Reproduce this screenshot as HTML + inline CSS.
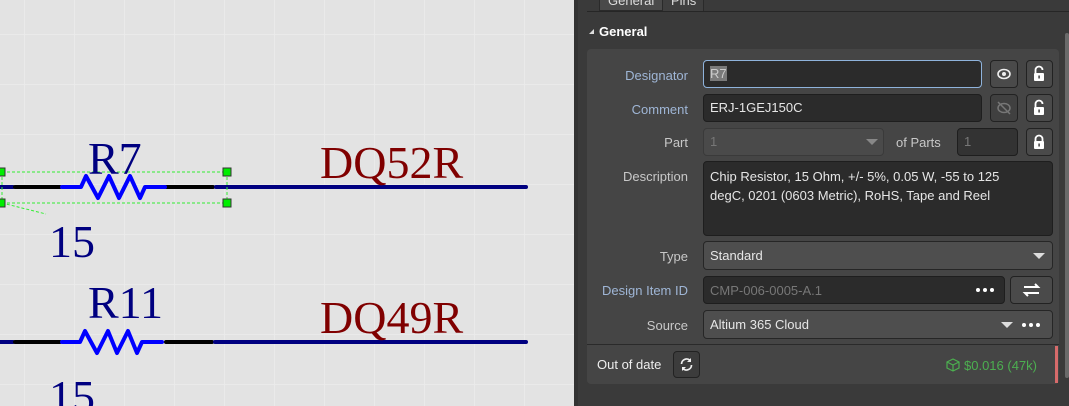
<!DOCTYPE html>
<html><head><meta charset="utf-8"><style>
*{box-sizing:border-box;margin:0;padding:0}
body{width:1069px;height:406px;overflow:hidden;background:#e3e3e3;font-family:"Liberation Sans",sans-serif;position:relative}
.abs{position:absolute}
#panel{left:574px;top:0;width:495px;height:406px;background:#3a3a3a}
.lbl{position:absolute;right:381px;color:#c8c8c8;font-size:13px;text-align:right;white-space:nowrap}
.lbl.b{color:#9fb6d6}
.inp{position:absolute;background:#2b2b2b;border:1px solid #1e1e1e;border-radius:4px;color:#e6e6e6;font-size:13px;padding-left:6px;line-height:25px}
.dd{position:absolute;background:#4e4e4e;border:1px solid #262626;border-radius:4px;color:#e6e6e6;font-size:13px;padding-left:6px;line-height:25px}
.btn{position:absolute;background:#4a4a4a;border:1px solid #222;border-radius:4px}
.tri{position:absolute;width:0;height:0;border-left:6px solid transparent;border-right:6px solid transparent;border-top:6px solid #ddd}
.dots{position:absolute;display:flex;gap:3px}
.dots i{width:4px;height:4px;border-radius:2px;background:#fff}
</style></head><body>
<svg class="abs" style="left:0;top:0" width="574" height="406">
<defs><pattern id="g" width="50" height="50" patternUnits="userSpaceOnUse" x="24" y="34"><path d="M0 0H50M0 0V50" stroke="#ececec" stroke-width="1.5" fill="none"/></pattern></defs>
<rect width="574" height="406" fill="url(#g)"/>
<g stroke-linecap="round" fill="none">
<line x1="0" y1="187" x2="13" y2="187" stroke="#000080" stroke-width="4"/>
<line x1="15" y1="187" x2="60" y2="187" stroke="#000" stroke-width="4"/>
<line x1="166" y1="187" x2="213" y2="187" stroke="#000" stroke-width="4"/>
<line x1="216" y1="187" x2="526" y2="187" stroke="#000080" stroke-width="4"/>
<polyline points="62,187 81,187 86,176 98,198 109,176 119,198 130,176 140,198 145,187 165,187" stroke="#0000ff" stroke-width="4" stroke-linejoin="round"/>
<line x1="0" y1="342" x2="13" y2="342" stroke="#000080" stroke-width="4"/>
<line x1="15" y1="342" x2="60" y2="342" stroke="#000" stroke-width="4"/>
<line x1="166" y1="342" x2="212" y2="342" stroke="#000" stroke-width="4"/>
<line x1="215" y1="342" x2="526" y2="342" stroke="#000080" stroke-width="4"/>
<polyline points="62,342 80,342 85,331 97,353 108,331 117,353 128,331 137,353 142,342 162,342" stroke="#0000ff" stroke-width="4" stroke-linejoin="round"/>
</g>
<g stroke="#33ee33" stroke-width="1" stroke-dasharray="3,2" fill="none">
<line x1="2" y1="172" x2="227" y2="172"/><line x1="2" y1="203" x2="227" y2="203"/>
<line x1="2" y1="172" x2="2" y2="203"/><line x1="227" y1="172" x2="227" y2="203"/>
<line x1="2" y1="203" x2="46" y2="214"/>
</g>
<g fill="#00ee00" stroke="#333" stroke-width="1">
<rect x="-3" y="168" width="8" height="8"/><rect x="223" y="168" width="8" height="8"/>
<rect x="-3" y="199" width="8" height="8"/><rect x="223" y="199" width="8" height="8"/>
</g>
<g font-family="Liberation Serif,serif" font-size="46">
<text x="88" y="174" fill="#000080">R7</text>
<text x="49" y="257" fill="#000080">15</text>
<text x="320" y="178" fill="#800000">DQ52R</text>
<text x="88" y="318" fill="#000080">R11</text>
<text x="49" y="412" fill="#000080">15</text>
<text x="320" y="333" fill="#800000">DQ49R</text>
</g>
</svg>
<div id="panel" class="abs">
<div class="abs" style="left:0;top:0;width:4px;height:406px;background:#333"></div>
<div class="abs" style="left:25px;top:0;width:64px;height:11px;background:#4a4a4a;border:1px solid #2a2a2a;border-top:none;color:#ddd;font-size:13px;line-height:2px;padding-left:8px;overflow:hidden">General</div>
<div class="abs" style="left:89px;top:0;width:41px;height:11px;background:#3f3f3f;border-right:1px solid #2a2a2a;color:#ddd;font-size:13px;line-height:2px;padding-left:8px;overflow:hidden">Pins</div>
<div class="abs" style="left:13px;top:11px;width:482px;height:1px;background:#262626"></div>
<div class="abs" style="left:15px;top:29px;width:0;height:0;border-left:5px solid transparent;border-bottom:5px solid #ddd"></div>
<div class="abs" style="left:25px;top:24px;color:#fff;font-weight:bold;font-size:13px">General</div>
<div class="abs" style="left:491px;top:33px;width:4px;height:345px;background:#6a6a6a;border-radius:2px"></div>
<div class="abs" style="left:13px;top:49px;width:472px;height:335px;background:#454545;border-radius:4px"></div>
<div class="abs" style="left:13px;top:344px;width:472px;height:1px;background:#2a2a2a"></div>

<div class="lbl b" style="top:68px">Designator</div>
<div class="inp" style="left:129px;top:60px;width:279px;height:28px;border-color:#8fb3dc;line-height:26px;color:#bbb"><span style="background:#7a7a7a;color:#ccc">R7</span></div>
<div class="btn" style="left:416px;top:60px;width:28px;height:28px"><svg width="26" height="26"><ellipse cx="13" cy="13" rx="6" ry="4.5" fill="none" stroke="#eee" stroke-width="1.6"/><circle cx="13" cy="13" r="2" fill="#eee"/></svg></div>
<div class="btn" style="left:452px;top:60px;width:27px;height:28px"><svg width="25" height="26"><path d="M8.5 12V9a3.5 3.5 0 0 1 7 0" fill="none" stroke="#fff" stroke-width="1.8"/><rect x="7" y="12" width="10" height="8" rx="1" fill="#fff"/><rect x="11.3" y="14.5" width="1.6" height="3" fill="#4a4a4a"/></svg></div>

<div class="lbl b" style="top:102px">Comment</div>
<div class="inp" style="left:129px;top:94px;width:279px;height:28px">ERJ-1GEJ150C</div>
<div class="btn" style="left:416px;top:94px;width:28px;height:28px;background:#404040"><svg width="26" height="26"><ellipse cx="13" cy="13" rx="6" ry="4.5" fill="none" stroke="#777" stroke-width="1.5"/><line x1="7" y1="7" x2="19" y2="19" stroke="#777" stroke-width="1.5"/></svg></div>
<div class="btn" style="left:452px;top:94px;width:27px;height:28px"><svg width="25" height="26"><path d="M8.5 12V9a3.5 3.5 0 0 1 7 0" fill="none" stroke="#fff" stroke-width="1.8"/><rect x="7" y="12" width="10" height="8" rx="1" fill="#fff"/><rect x="11.3" y="14.5" width="1.6" height="3" fill="#4a4a4a"/></svg></div>

<div class="lbl" style="top:135px">Part</div>
<div class="dd" style="left:129px;top:128px;width:181px;height:28px;background:#4a4a4a;border-color:#3a3a3a;color:#777">1</div>
<div class="tri" style="left:292px;top:139px;border-top-color:#888"></div>
<div class="abs" style="left:322px;top:135px;color:#c8c8c8;font-size:13px">of Parts</div>
<div class="inp" style="left:383px;top:128px;width:61px;height:28px;color:#777;background:#333">1</div>
<div class="btn" style="left:452px;top:128px;width:27px;height:28px"><svg width="25" height="26"><path d="M8.5 13V10a3.5 3.5 0 0 1 7 0V13" fill="none" stroke="#fff" stroke-width="1.8"/><rect x="7" y="12" width="10" height="8" rx="1" fill="#fff"/><rect x="11.3" y="14.5" width="1.6" height="3" fill="#4a4a4a"/></svg></div>

<div class="lbl" style="top:169px">Description</div>
<div class="inp" style="left:129px;top:161px;width:350px;height:75px;line-height:19px;padding-top:5px;padding-right:22px">Chip Resistor, 15 Ohm, +/- 5%, 0.05 W, -55 to 125 degC, 0201 (0603 Metric), RoHS, Tape and Reel</div>

<div class="lbl" style="top:249px">Type</div>
<div class="dd" style="left:129px;top:241px;width:350px;height:29px;line-height:27px">Standard</div>
<div class="tri" style="left:459px;top:253px"></div>

<div class="lbl b" style="top:283px">Design Item ID</div>
<div class="inp" style="left:129px;top:276px;width:302px;height:28px;line-height:27px;color:#777">CMP-006-0005-A.1</div>
<div class="dots" style="left:402px;top:288px"><i></i><i></i><i></i></div>
<div class="btn" style="left:436px;top:276px;width:43px;height:28px"><svg width="41" height="26"><path d="M13 10h14l-3-3M28 16H14l3 3" fill="none" stroke="#fff" stroke-width="2"/></svg></div>

<div class="lbl" style="top:318px">Source</div>
<div class="dd" style="left:129px;top:310px;width:350px;height:29px;line-height:28px">Altium 365 Cloud</div>
<div class="tri" style="left:427px;top:322px"></div>
<div class="dots" style="left:448px;top:323px"><i></i><i></i><i></i></div>

<div class="abs" style="left:23px;top:357px;color:#eee;font-size:13px">Out of date</div>
<div class="btn" style="left:99px;top:351px;width:27px;height:27px;background:#3c3c3c"><svg width="25" height="25"><path d="M7.5 12a5 5 0 0 1 9-3M17.5 13a5 5 0 0 1-9 3" fill="none" stroke="#eee" stroke-width="1.7"/><path d="M17 6v4h-4M8 19v-4h4" fill="#eee"/></svg></div>
<div class="abs" style="left:372px;top:358px;color:#4caf50;font-size:13px"><svg width="14" height="14" style="vertical-align:-2px;margin-right:4px"><path d="M7 1l6 3v6l-6 3-6-3V4zM1 4l6 3 6-3M7 7v6" fill="none" stroke="#4caf50" stroke-width="1.2"/></svg>$0.016 (47k)</div>
<div class="abs" style="left:481px;top:346px;width:3px;height:37px;background:#d76b6b"></div>
</div>
</body></html>
